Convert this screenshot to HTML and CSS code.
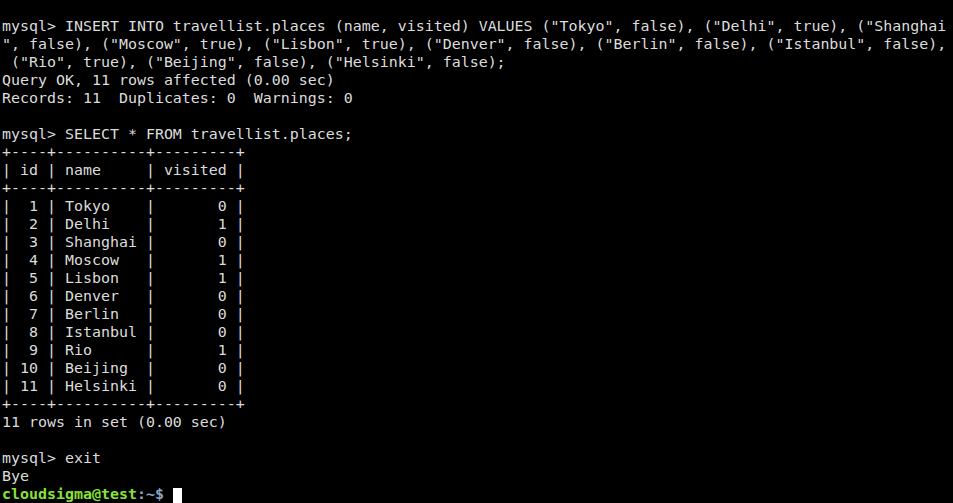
FILE: index.html
```html
<!DOCTYPE html>
<html>
<head>
<meta charset="utf-8">
<link rel="stylesheet" href="styles.css">
</head>
<body>
<pre class="term">mysql&gt; INSERT INTO travellist.places (name, visited) VALUES ("Tokyo", false), ("Delhi", true), ("Shanghai
", false), ("Moscow", true), ("Lisbon", true), ("Denver", false), ("Berlin", false), ("Istanbul", false),
 ("Rio", true), ("Beijing", false), ("Helsinki", false);
Query OK, 11 rows affected (0.00 sec)
Records: 11  Duplicates: 0  Warnings: 0

mysql&gt; SELECT * FROM travellist.places;
+----+----------+---------+
| id | name     | visited |
+----+----------+---------+
|  1 | Tokyo    |       0 |
|  2 | Delhi    |       1 |
|  3 | Shanghai |       0 |
|  4 | Moscow   |       1 |
|  5 | Lisbon   |       1 |
|  6 | Denver   |       0 |
|  7 | Berlin   |       0 |
|  8 | Istanbul |       0 |
|  9 | Rio      |       1 |
| 10 | Beijing  |       0 |
| 11 | Helsinki |       0 |
+----+----------+---------+
11 rows in set (0.00 sec)

mysql&gt; exit
Bye
<span class="user">cloudsigma@test</span><span class="path">:~$</span> <span class="cursor"> </span></pre>
</body>
</html>
```

FILE: styles.css
```css
html, body {
  margin: 0;
  padding: 0;
  background: #000;
  width: 953px;
  height: 503px;
  overflow: hidden;
}
.term {
  margin: 0;
  padding: 17px 0 0 2px;
  font-family: "DejaVu Sans Mono", "Liberation Mono", monospace;
  font-size: 14.95px;
  line-height: 18px;
  color: #dcdcdc;
  white-space: pre;
}
.user {
  color: #8ae234;
  font-weight: bold;
}
.path {
  color: #8fa8c8;
  font-weight: bold;
}
.cursor {
  display: inline-block;
  width: 9px;
  height: 16px;
  background: #ffffff;
  vertical-align: -3px;
}
```
